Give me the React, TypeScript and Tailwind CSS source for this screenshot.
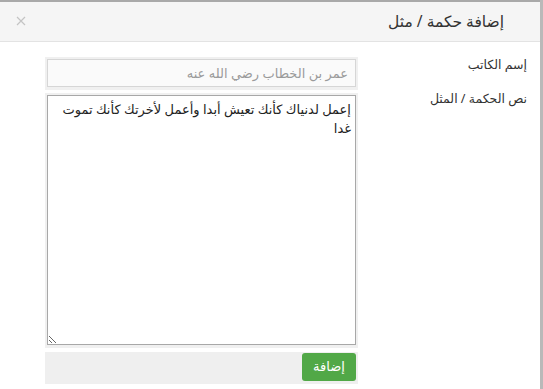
import React from "react";

const font = { fontFamily: '"Noto Sans", "DejaVu Sans", sans-serif' };

const App = () => {
  return (
    <div className="flex h-[389px] w-[543px] bg-[#b9b9b9]" style={font}>
      <div dir="rtl" className="flex w-[540px] flex-col border-t-2 border-[#a9a9a9] bg-white">
        {/* Header */}
        <div className="flex h-[40px] items-center justify-between border-b border-[#e3e3e3] bg-[#f5f5f5] pr-[36px] pl-[16px]">
          <h3 className="text-[15.5px] leading-none text-[#333]">إضافة حكمة / مثل</h3>
          <svg width="10" height="10" viewBox="0 0 10 10" className="mb-[2px]">
            <path d="M1 1 L9 9 M9 1 L1 9" stroke="#c4c4c4" strokeWidth="1.2" />
          </svg>
        </div>

        {/* Body */}
        <div className="flex flex-col pt-[15px] pr-[13px] pl-[45px]">
          <div className="flex">
            <div className="-mt-[1px] w-[169px] space-y-[16px] text-[12.5px] leading-[18px] text-[#333]">
              <p>إسم الكاتب</p>
              <p>نص الحكمة / المثل</p>
            </div>
            <div className="flex w-[313px] flex-col gap-[3px]">
              <div className="bg-[#f0f0f0] p-[2px] pb-[3px]">
                <input
                  placeholder="عمر بن الخطاب رضي الله عنه"
                  className="h-[28px] w-full border border-[#d6d6d6] bg-[#fafafa] px-[7px] text-[13px] text-[#333] placeholder:text-[#9a9a9a] outline-none"
                />
              </div>
              <div className="bg-[#f0f0f0] p-[2px] pb-[3px]">
                <textarea
                  defaultValue="إعمل لدنياك كأنك تعيش أبدا وأعمل لأخرتك كأنك تموت غدا"
                  spellCheck={false}
                  className="block h-[250px] w-full border border-[#a8a8a8] bg-white px-[4px] py-[4px] text-[13px] leading-[19px] text-[#222] outline-none"
                />
              </div>
              <div className="mt-[1px] flex h-[32px] bg-[#efefef] pt-[1px] pr-[2px]">
                <button className="h-[28px] w-[54px] rounded-[3px] bg-[#51a847] text-[13px] text-white">
                  إضافة
                </button>
              </div>
            </div>
          </div>
        </div>
      </div>
    </div>
  );
};

export default App;
